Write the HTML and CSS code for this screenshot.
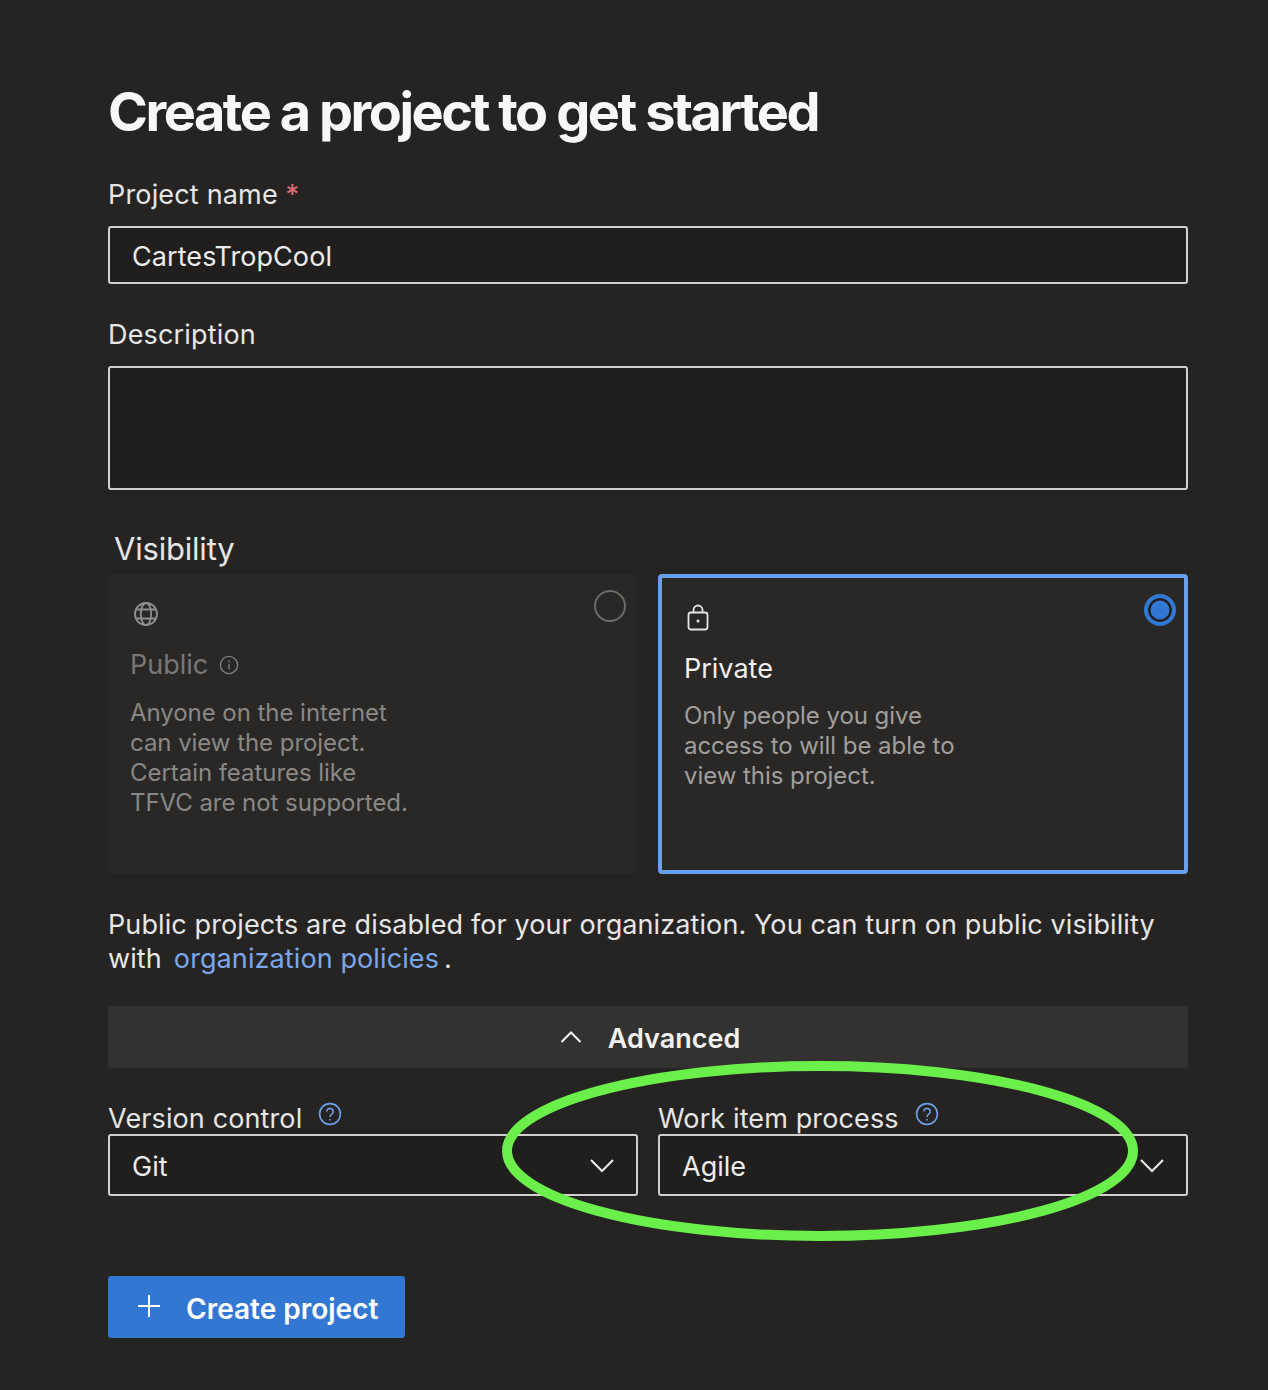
FILE: index.html
```html
<!DOCTYPE html>
<html>

<head>
  <title>Create a project</title>
  <link rel="stylesheet" href="styles.css">
</head>

<body>
  <div class="page">
    <h1>Create a project to get started</h1>

    <label class="field-label name-label">Project name <span class="required">*</span></label>
    <div class="input">CartesTropCool</div>

    <label class="field-label desc-label">Description</label>
    <div class="input textarea"></div>

    <div class="visibility-label">Visibility</div>
    <div class="cards">
      <div class="card card-public">
        <div class="radio"></div>
        <svg class="card-icon" width="26" height="26" viewBox="0 0 26 26" fill="none" stroke="#8f8f8f" stroke-width="1.8">
          <circle cx="13" cy="13" r="11"/>
          <ellipse cx="13" cy="13" rx="5.2" ry="11"/>
          <path d="M3.4 8.5h19.2M3.4 17.5h19.2"/>
        </svg>
        <div class="card-title">Public
          <svg class="info" width="20" height="20" viewBox="0 0 20 20" fill="none" stroke="#7c7c7c" stroke-width="1.4">
            <circle cx="10" cy="10" r="8.6"/>
            <path d="M10 9v5.2M10 5.6v1.6"/>
          </svg>
        </div>
        <p class="card-text">Anyone on the internet<br>can view the project.<br>Certain features like<br>TFVC are not supported.</p>
      </div>
      <div class="card card-private">
        <div class="radio radio-on"></div>
        <svg class="card-icon" width="24" height="28" viewBox="0 0 24 28" fill="none" stroke="#e4e4e4" stroke-width="1.8">
          <rect x="2.5" y="8.5" width="19" height="17" rx="2.5"/>
          <path d="M7.5 8.5V6a4.5 4.5 0 0 1 9 0v2.5"/>
          <circle cx="12" cy="17" r="1.5" fill="#e4e4e4" stroke="none"/>
        </svg>
        <div class="card-title">Private</div>
        <p class="card-text">Only people you give<br>access to will be able to<br>view this project.</p>
      </div>
    </div>

    <div class="note">
      <div>Public projects are disabled for your organization. You can turn on public visibility</div>
      <div class="note-line"><span>with</span><a href="#">organization policies</a><span>.</span></div>
    </div>

    <div class="advanced">
      <svg width="22" height="14" viewBox="0 0 22 14" fill="none" stroke="#f2f2f2" stroke-width="2">
        <path d="M1.5 12L11 2.5l9.5 9.5"/>
      </svg>
      <span>Advanced</span>
    </div>

    <div class="selects">
      <div class="select-col">
        <div class="select-label">Version control
          <svg class="help" width="24" height="24" viewBox="0 0 24 24" fill="none" stroke="#6f9fe6" stroke-width="1.6">
            <circle cx="12" cy="12" r="10.4"/>
            <path d="M8.8 9.5a3.2 3.2 0 1 1 5 2.7c-1.1.8-1.8 1.3-1.8 2.8M12 17v1.6"/>
          </svg>
        </div>
        <div class="select">Git
          <svg class="chevron" width="26" height="16" viewBox="0 0 26 16" fill="none" stroke="#f0f0f0" stroke-width="2">
            <path d="M2 3l11 11L24 3"/>
          </svg>
        </div>
      </div>
      <div class="select-col">
        <div class="select-label">Work item process
          <svg class="help" width="24" height="24" viewBox="0 0 24 24" fill="none" stroke="#6f9fe6" stroke-width="1.6">
            <circle cx="12" cy="12" r="10.4"/>
            <path d="M8.8 9.5a3.2 3.2 0 1 1 5 2.7c-1.1.8-1.8 1.3-1.8 2.8M12 17v1.6"/>
          </svg>
        </div>
        <div class="select">Agile
          <svg class="chevron" width="26" height="16" viewBox="0 0 26 16" fill="none" stroke="#f0f0f0" stroke-width="2">
            <path d="M2 3l11 11L24 3"/>
          </svg>
        </div>
      </div>
    </div>

    <button class="create">
      <svg width="24" height="24" viewBox="0 0 24 24" fill="none" stroke="#fff" stroke-width="2">
        <path d="M12 1v22M1 12h22"/>
      </svg>
      Create project
    </button>
  </div>

  <!-- hand drawn circle on top of the screenshot -->
  <svg class="scribble" width="650" height="190" viewBox="0 0 650 190" fill="none" stroke="#6bef4a" stroke-width="10">
    <ellipse cx="325" cy="95" rx="313" ry="85"/>
  </svg>
</body>

</html>
```

FILE: styles.css
```css
* {
  box-sizing: border-box;
}

body {
  font-family: Inter, "Liberation Sans", sans-serif;
  background-color: #252423;
  color: #f0f0f0;
  margin: 0;
}

.page {
  padding: 82px 80px 52px 108px;
  height: 1390px;
}

h1 {
  font-size: 54px;
  line-height: 60px;
  font-weight: 700;
  letter-spacing: -2.45px;
  color: #f8f8f8;
  margin: 0;
}

.field-label {
  display: block;
  font-size: 27px;
  line-height: 32px;
  letter-spacing: 0.17px;
  color: #e6e6e6;
}

.name-label {
  margin-top: 37px;
  margin-bottom: 15px;
}

.desc-label {
  margin-top: 35px;
  margin-bottom: 15px;
}

.required {
  color: #e0707c;
}

.input {
  height: 58px;
  border: 2px solid #d2d0ce;
  border-radius: 3px;
  background-color: #201f1e;
  padding: 0 22px;
  font-size: 27px;
  line-height: 58px;
  letter-spacing: 0.07px;
  color: #ececec;
}

.textarea {
  height: 124px;
}

.visibility-label {
  font-size: 31px;
  line-height: 38px;
  letter-spacing: -0.2px;
  margin: 40px 0 6px 6px;
  color: #e6e6e6;
}

.cards {
  display: grid;
  grid-template-columns: 528px 530px;
  gap: 22px;
  height: 300px;
}

.card {
  position: relative;
  background-color: #292827;
  border-radius: 3px;
  padding: 27px 22px;
}

.card-private {
  border: 4px solid #6a9ff0;
  border-radius: 4px;
  padding: 26px 22px;
}

.card-icon {
  display: block;
}

.card-public .card-icon {
  margin-left: 3px;
}

.card-private .card-icon {
  margin-left: 2px;
}

.card-title {
  display: flex;
  align-items: center;
  gap: 11px;
  font-size: 27px;
  line-height: 34px;
  color: #f0f0f0;
  margin-top: 20px;
}

.card-public .card-title {
  color: #797775;
  margin-top: 21px;
}

.card-text {
  font-size: 24px;
  line-height: 30px;
  letter-spacing: -0.05px;
  color: #a19f9d;
  margin: 15px 0 0;
}

.card-public .card-text {
  color: #8a8886;
  margin-top: 16px;
}

.radio {
  position: absolute;
  top: 16px;
  right: 10px;
  width: 32px;
  height: 32px;
  border: 2px solid #6e6c6a;
  border-radius: 50%;
}

.radio-on {
  top: 16px;
  right: 8px;
  border: 4px solid #3277d2;
  background-color: #3277d2;
  box-shadow: inset 0 0 0 2.5px #201f1e;
}

.note {
  font-size: 27px;
  line-height: 34px;
  letter-spacing: 0.1px;
  color: #e6e6e6;
  margin: 34px 0 0;
}

.note-line {
  display: flex;
}

.note-line a {
  color: #7ba7ea;
  text-decoration: none;
  margin: 0 5px 0 12px;
}

.advanced {
  display: flex;
  align-items: center;
  justify-content: center;
  gap: 26px;
  height: 62px;
  margin-top: 30px;
  padding: 2px 0 0 4px;
  background-color: #333231;
  border-radius: 3px;
  font-size: 27px;
  font-weight: 600;
  color: #f2f2f2;
}

.advanced svg {
  margin-bottom: 2px;
}

.selects {
  display: grid;
  grid-template-columns: 530px 530px;
  gap: 20px;
  margin-top: 34px;
}

.select-label {
  display: flex;
  align-items: flex-start;
  gap: 16px;
  height: 32px;
  font-size: 27px;
  line-height: 34px;
  letter-spacing: 0.12px;
  color: #e6e6e6;
}

.select {
  position: relative;
  height: 62px;
  border: 2px solid #d2d0ce;
  border-radius: 3px;
  background-color: #201f1e;
  padding: 0 22px;
  font-size: 27px;
  line-height: 62px;
  color: #ececec;
}

.chevron {
  position: absolute;
  right: 21px;
  top: 21px;
}

.create {
  display: flex;
  align-items: center;
  gap: 25px;
  width: 297px;
  height: 62px;
  margin-top: 80px;
  padding: 4px 0 0 29px;
  background-color: #3277d2;
  color: #fff;
  border: none;
  border-radius: 3px;
  font-family: inherit;
  font-size: 28px;
  font-weight: 600;
}

.create svg {
  margin-bottom: 6px;
}

.scribble {
  position: absolute;
  left: 495px;
  top: 1056px;
}
```
